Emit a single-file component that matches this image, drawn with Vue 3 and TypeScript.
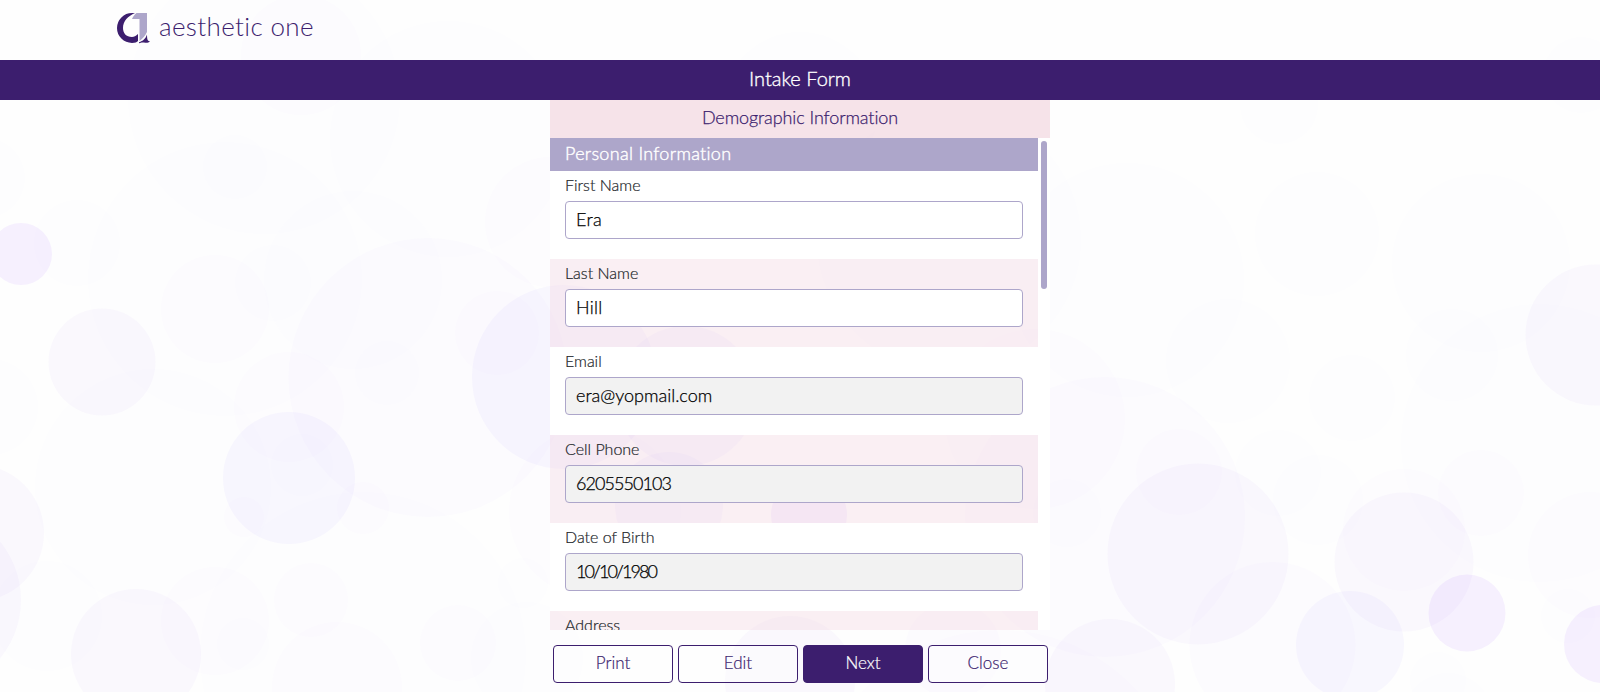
<script setup lang="ts">
interface Bubble { x: number; y: number; r: number; tone: string }
interface Field { label: string; value: string; locked: boolean; kind: string }

const make = (tone: string, list: number[][]): Bubble[] =>
  list.map(([x, y, r]) => ({ x, y, r, tone }))

const bubbles: Bubble[] = [
  ...make('faint', [
    [77, 243, 43], [-15, 178, 40], [387, 373, 32], [363, 655, 163], [1127, 280, 117],
    [1228, 361, 62], [1279, 105, 39], [1317, 234, 62], [1481, 263, 89], [1452, 355, 46],
    [1540, 443, 139], [1352, 398, 43], [1278, 473, 43], [1318, 500, 45], [1568, 616, 27],
    [1438, 680, 28], [523, 583, 25], [47, 616, 55], [1067, 513, 34], [1581, 75, 38],
    [153, 487, 118], [225, 279, 137], [264, 98, 136], [448, 139, 118], [-10, 407, 48],
    [527, 658, 56], [302, 465, 31], [235, 167, 32], [949, 240, 132], [1448, 718, 45],
    [800, 110, 78], [273, 283, 38], [353, 280, 89], [243, 644, 26],
  ]),
  ...make('light', [
    [215, 309, 54], [497, 333, 42], [289, 407, 55],
    [301, 55, 60], [550, 222, 65], [363, 508, 26], [244, 517, 20], [215, 621, 54],
    [311, 600, 37], [337, 687, 65], [458, 643, 38], [1035, 419, 90],
    [1179, 472, 43], [1481, 493, 43], [1591, 555, 63], [1404, 530, 61], [1000, 815, 185],
    [595, 512, 86],
  ]),
  ...make('soft', [[428, 377.5, 139.5], [1105, 517, 140], [1272.5, 645, 83], [953, 650, 48]]),
  ...make('medium', [
    [102, 362, 53.5], [136, 654, 65], [-24.5, 533, 68.5], [-71, 600, 92], [1596, 335, 70.5],
    [1198, 554, 90.5], [1404, 562, 69.5], [1110, 684, 65], [790, 681, 65],
  ]),
  ...make('blue', [[289, 478, 66], [564, 377, 92], [1350, 645, 54], [686, 396, 70], [669, 506, 54]]),
  ...make('violet', [[21, 254, 31], [1467, 613, 38.5], [1603, 644, 39], [809, 515, 38]]),
]

const fields: Field[] = [
  { label: 'First Name', value: 'Era', locked: false, kind: 'name' },
  { label: 'Last Name', value: 'Hill', locked: false, kind: 'name' },
  { label: 'Email', value: 'era@yopmail.com', locked: true, kind: 'mail' },
  { label: 'Cell Phone', value: '6205550103', locked: true, kind: 'digits' },
  { label: 'Date of Birth', value: '10/10/1980', locked: true, kind: 'date' },
  { label: 'Address', value: '', locked: false, kind: 'name' },
]

const actions = ['Print', 'Edit', 'Next', 'Close']
</script>

<template>
  <div class="page">
    <svg class="backdrop" viewBox="0 0 1600 692" aria-hidden="true">
      <circle v-for="(b, i) in bubbles" :key="i" :cx="b.x" :cy="b.y" :r="b.r" :class="b.tone" />
    </svg>
    <header class="brand">
      <svg class="mark" width="34" height="32" viewBox="0 0 34 32" aria-hidden="true">
        <path class="mark-dark" d="M19 1H16A15 15 0 0 0 1 16A15 15 0 0 0 16 31C19 31 21 30 22 29V22C20 24 18 25 16 25C10 25 7 21 7 16C7 9 12 4 19 1Z" />
        <path class="mark-light" d="M20.5 1H31V20C29 24 27 26.500 23.500 29V7H16C17 4.500 18.500 2.500 20.500 1Z" />
        <path class="mark-dark" d="M31 22.500C31 27 31.500 29.500 34 29.200C32.500 31 30 31 28 30.500C26 30.200 25 30.500 23 31.200V30.200C27 29 29.500 27 31 22.500Z" />
      </svg>
      <span class="wordmark">aesthetic one</span>
    </header>
    <h1 class="title">Intake Form</h1>
    <main class="panel">
      <h2 class="step">Demographic Information</h2>
      <div class="viewport">
        <div class="list">
          <h3 class="section">Personal Information</h3>
          <div v-for="f in fields" :key="f.label" class="row">
            <label class="label">{{ f.label }}</label>
            <div class="control" :class="[f.kind, { locked: f.locked }]">{{ f.value }}</div>
          </div>
        </div>
        <div class="rail"><div class="thumb"></div></div>
      </div>
      <div class="actions">
        <button v-for="a in actions" :key="a" type="button" class="btn" :class="{ primary: a === 'Next' }">{{ a }}</button>
      </div>
    </main>
  </div>
</template>

<style>
body { margin: 0; overflow: hidden; }
</style>

<style scoped>
.page {
  position: relative;
  width: 1600px;
  height: 692px;
  overflow: hidden;
  background: #fefefe;
  font-family: Lato, "Liberation Sans", sans-serif;
  font-weight: 300;
  font-variant-ligatures: none;
}
.backdrop { position: absolute; inset: 0; width: 1600px; height: 692px; }
.faint { fill: rgba(140, 110, 255, 0.007); }
.light { fill: rgba(140, 90, 255, 0.012); }
.soft { fill: rgba(150, 80, 255, 0.019); }
.medium { fill: rgba(130, 80, 240, 0.036); }
.blue { fill: rgba(110, 80, 255, 0.038); }
.violet { fill: rgba(140, 50, 255, 0.07); }
.brand {
  position: relative;
  box-sizing: border-box;
  height: 60px;
  padding: 12px 0 0 116px;
  display: flex;
  align-items: flex-start;
}
.mark { flex: none; }
.mark-dark { fill: #3c1e6e; }
.mark-light { fill: #ada6ca; }
.wordmark {
  margin-left: 9px;
  font-size: 26px;
  line-height: 29px;
  letter-spacing: 0.35px;
  color: #3c1e6e;
  white-space: nowrap;
}
.title {
  position: relative;
  margin: 0;
  height: 40px;
  line-height: 37px;
  background: #3c1e6e;
  color: #fff;
  text-align: center;
  font-size: 20px;
  font-weight: 300;
  -webkit-text-stroke: 0.35px currentColor;
}
.panel { position: relative; width: 500px; margin: 0 auto; }
.step {
  margin: 0;
  height: 38px;
  line-height: 34px;
  background: rgba(237, 190, 204, 0.42);
  color: #3c1e6e;
  text-align: center;
  font-size: 18px;
  font-weight: 300;
  letter-spacing: -0.1px;
  -webkit-text-stroke: 0.25px currentColor;
}
.viewport { display: flex; height: 492px; overflow: hidden; }
.list { width: 488px; }
.rail { width: 12px; background: #fff; }
.thumb { width: 6px; height: 148px; margin: 3px 0 0 3px; border-radius: 3px; background: #ada6ca; }
.section {
  box-sizing: border-box;
  margin: 0;
  height: 33px;
  padding-left: 15px;
  line-height: 30px;
  background: #ada6ca;
  color: #fff;
  font-size: 18px;
  font-weight: 300;
  letter-spacing: 0.3px;
  -webkit-text-stroke: 0.4px currentColor;
}
.row { box-sizing: border-box; height: 88px; padding: 0 15px; background: #fff; }
.row:nth-child(odd) { background: rgba(243, 208, 222, 0.32); }
.label { display: block; height: 30px; line-height: 27px; font-size: 16px; color: #212529; -webkit-text-stroke: 0.2px currentColor; }
.control {
  box-sizing: border-box;
  height: 38px;
  padding: 0 11px 0 10px;
  border: 1px solid #ada6ca;
  border-radius: 4px;
  background: #fff;
  line-height: 35px;
  font-size: 18px;
  color: #000;
  -webkit-text-stroke: 0.25px currentColor;
}
.locked { background: #f2f2f2; }
.name { letter-spacing: 0.3px; }
.digits { letter-spacing: -0.95px; }
.date { letter-spacing: -1.9px; }
.actions { display: flex; gap: 5px; padding: 15px 0 0 3px; }
.btn {
  width: 120px;
  height: 38px;
  padding: 0 0 3px;
  border: 1px solid #3c1e6e;
  border-radius: 4px;
  background: rgba(255, 255, 255, 0.3);
  color: #3c1e6e;
  font: 300 17px Lato, "Liberation Sans", sans-serif;
  -webkit-text-stroke: 0.2px currentColor;
}
.primary { background: #3c1e6e; color: #fff; }
</style>
